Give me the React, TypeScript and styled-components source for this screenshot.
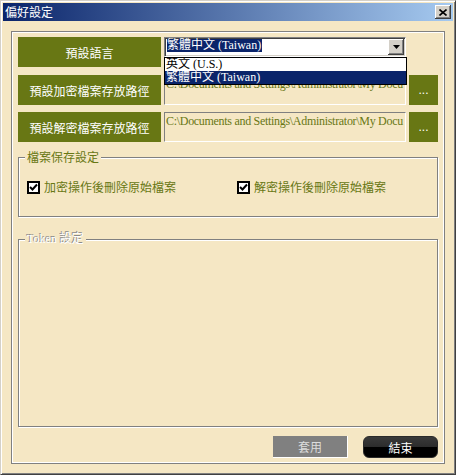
import React from "react";
import styled, { createGlobalStyle } from "styled-components";

const beige = "#f5e7c4";
const olive = "#687714";
const navy = "#0a246a";
const cjk = `"Noto Sans CJK TC", "Noto Sans CJK SC", sans-serif`;
const serifCjk = `"Liberation Serif", "Noto Sans CJK TC", serif`;

const GlobalStyle = createGlobalStyle`
	html, body {
		margin: 0;
		padding: 0;
		background: ${beige};
	}
	body {
		width: 456px;
		height: 475px;
		overflow: hidden;
		font-family: ${cjk};
	}
`;

const Window = styled.div`
	box-sizing: border-box;
	width: 456px;
	height: 475px;
	background: ${beige};
	border: 1px solid;
	border-color: #d4d0c8 #404040 #404040 #d4d0c8;
	box-shadow: inset 1px 1px 0 #fff, inset -1px -1px 0 #808080;
	padding: 2px;
	display: flex;
	flex-direction: column;
`;

const TitleBar = styled.div`
	height: 18px;
	flex: none;
	display: flex;
	align-items: center;
	justify-content: space-between;
	padding: 0 2px;
	background: linear-gradient(to right, ${navy}, #a6caf0);
`;

const TitleText = styled.span`
	color: #fff;
	font-family: ${cjk};
	font-size: 12px;
	line-height: 18px;
`;

const CloseButton = styled.button`
	box-sizing: border-box;
	width: 16px;
	height: 14px;
	padding: 0;
	border: none;
	background: #d4d0c8;
	box-shadow: inset -1px -1px 0 #404040, inset 1px 1px 0 #fff,
		inset -2px -2px 0 #808080;
	display: flex;
	align-items: center;
	justify-content: center;
`;

const Panel = styled.div`
	flex: 1;
	margin: 10px 8px 8px 8px;
	border: 1px solid #808080;
	box-shadow: inset 0 0 0 1px #fff;
	padding: 5px 6px;
	display: flex;
	flex-direction: column;
	min-height: 0;
`;

const SettingsGrid = styled.div`
	display: grid;
	grid-template-columns: 143px 242px 29px;
	grid-template-rows: 31px 30px 30px;
	column-gap: 3px;
	row-gap: 7px;
`;

const LabelButton = styled.div`
	height: 30px;
	background: ${olive};
	color: #fff;
	font-family: ${cjk};
	font-size: 12px;
	display: flex;
	align-items: center;
	justify-content: center;
`;

const ComboCell = styled.div`
	position: relative;
`;

const Combo = styled.div`
	box-sizing: border-box;
	height: 20px;
	background: #fff;
	border: 1px solid;
	border-color: #808080 #fff #fff #808080;
	box-shadow: inset 1px 1px 0 #404040, inset -1px -1px 0 #d4d0c8;
	padding: 1px;
	display: flex;
	justify-content: space-between;
`;

const ComboValue = styled.span`
	align-self: flex-start;
	margin-left: 1px;
	background: ${navy};
	color: #fff;
	font-family: ${serifCjk};
	font-size: 12px;
	line-height: 13px;
	padding-right: 1px;
	white-space: nowrap;
`;

const ArrowButton = styled.span`
	box-sizing: border-box;
	width: 16px;
	height: 16px;
	background: #d4d0c8;
	box-shadow: inset -1px -1px 0 #404040, inset 1px 1px 0 #fff,
		inset -2px -2px 0 #808080;
	display: flex;
	align-items: center;
	justify-content: center;
`;

const DropList = styled.ul`
	position: absolute;
	left: 0;
	top: 20px;
	z-index: 2;
	box-sizing: border-box;
	width: 243px;
	margin: 0;
	padding: 0;
	list-style: none;
	background: #fff;
	border: 1px solid #000;
`;

const DropItem = styled.li<{ $selected?: boolean }>`
	height: 13px;
	line-height: 13px;
	padding-left: 1px;
	font-family: ${serifCjk};
	font-size: 12px;
	white-space: nowrap;
	background: ${(p) => (p.$selected ? navy : "#fff")};
	color: ${(p) => (p.$selected ? "#fff" : "#000")};
`;

const PathField = styled.div`
	box-sizing: border-box;
	height: 30px;
	border: 1px solid;
	border-color: #808080 #fff #fff #808080;
	padding: 1px 0 0 1px;
	overflow: hidden;
	white-space: nowrap;
	color: ${olive};
	font-family: ${serifCjk};
	font-size: 12px;
	letter-spacing: -0.3px;
	line-height: 14px;
`;

const BrowseButton = styled.div`
	height: 30px;
	background: ${olive};
	color: #fff;
	font-family: "Liberation Sans", sans-serif;
	font-size: 12px;
	display: flex;
	align-items: center;
	justify-content: center;
`;

const Group = styled.fieldset<{ $grow?: boolean; $gap: number }>`
	margin: ${(p) => p.$gap}px 0 0 0;
	padding: 0 6px;
	border: 1px solid #808080;
	box-shadow: inset 1px 1px 0 #fff, 1px 1px 0 #fff;
	min-width: 0;
	min-height: 0;
	${(p) => (p.$grow ? "flex: 1;" : "")}
`;

const GroupTitle = styled.legend<{ $disabled?: boolean }>`
	padding: 0 2px;
	margin: 0;
	background: ${beige};
	font-family: ${(p) => (p.$disabled ? serifCjk : cjk)};
	font-size: 12px;
	line-height: 16px;
	color: ${(p) => (p.$disabled ? "#fff" : olive)};
	text-shadow: ${(p) => (p.$disabled ? "-1px -1px 0 #8a8a8a" : "none")};
`;

const CheckRow = styled.div`
	display: grid;
	grid-template-columns: 210px 1fr;
	margin: 14px 0 21px 2px;
	height: 16px;
`;

const CheckItem = styled.label`
	display: flex;
	align-items: center;
	gap: 4px;
	color: ${olive};
	font-family: ${cjk};
	font-size: 12px;
	line-height: 16px;
	white-space: nowrap;
`;

const CheckBox = styled.span`
	box-sizing: border-box;
	width: 13px;
	height: 13px;
	border: 2px solid #000;
	background: #fff;
	display: flex;
	align-items: center;
	justify-content: center;
`;

const ButtonRow = styled.div`
	display: flex;
	justify-content: flex-end;
	gap: 15px;
	margin-top: 9px;
	height: 22px;
	flex: none;
`;

const ApplyButton = styled.button`
	box-sizing: border-box;
	width: 75px;
	height: 22px;
	padding: 0;
	border: none;
	border-right: 1px solid #fff;
	border-bottom: 1px solid #fff;
	background: #808080;
	color: #dcdcdc;
	font-family: ${cjk};
	font-size: 12px;
`;

const EndButton = styled.button`
	box-sizing: border-box;
	width: 75px;
	height: 22px;
	padding: 0;
	border: 1px solid #2a2a2a;
	border-radius: 6px;
	background: linear-gradient(#3a3a3a 0%, #2c2c2c 48%, #000 50%, #000 100%);
	color: #fff;
	font-family: ${cjk};
	font-size: 12px;
`;

const docPath = "C:\\Documents and Settings\\Administrator\\My Docu";

function CheckMark() {
	return (
		<svg width="9" height="9" viewBox="0 0 9 9">
			<polyline
				points="1,4 3.5,6.5 8,1.5"
				fill="none"
				stroke="#000"
				strokeWidth="2"
			/>
		</svg>
	);
}

export default function App() {
	return (
		<>
			<GlobalStyle />
			<Window>
				<TitleBar>
					<TitleText>偏好設定</TitleText>
					<CloseButton aria-label="close">
						<svg width="8" height="7" viewBox="0 0 8 7">
							<path d="M0.5 0.5 L7.5 6.5 M7.5 0.5 L0.5 6.5" stroke="#000" strokeWidth="1.6" />
						</svg>
					</CloseButton>
				</TitleBar>
				<Panel>
					<SettingsGrid>
						<LabelButton>預設語言</LabelButton>
						<ComboCell>
							<Combo>
								<ComboValue>繁體中文 (Taiwan)</ComboValue>
								<ArrowButton>
									<svg width="7" height="4" viewBox="0 0 7 4">
										<path d="M0 0 H7 L3.5 4 Z" fill="#000" />
									</svg>
								</ArrowButton>
							</Combo>
							<DropList>
								<DropItem>英文 (U.S.)</DropItem>
								<DropItem $selected>繁體中文 (Taiwan)</DropItem>
							</DropList>
						</ComboCell>
						<div />
						<LabelButton>預設加密檔案存放路徑</LabelButton>
						<PathField>{docPath}</PathField>
						<BrowseButton>...</BrowseButton>
						<LabelButton>預設解密檔案存放路徑</LabelButton>
						<PathField>{docPath}</PathField>
						<BrowseButton>...</BrowseButton>
					</SettingsGrid>
					<Group $gap={7}>
						<GroupTitle>檔案保存設定</GroupTitle>
						<CheckRow>
							<CheckItem>
								<CheckBox>
									<CheckMark />
								</CheckBox>
								加密操作後刪除原始檔案
							</CheckItem>
							<CheckItem>
								<CheckBox>
									<CheckMark />
								</CheckBox>
								解密操作後刪除原始檔案
							</CheckItem>
						</CheckRow>
					</Group>
					<Group $gap={14} $grow>
						<GroupTitle $disabled>Token 設定</GroupTitle>
					</Group>
					<ButtonRow>
						<ApplyButton disabled>套用</ApplyButton>
						<EndButton>結束</EndButton>
					</ButtonRow>
				</Panel>
			</Window>
		</>
	);
}
